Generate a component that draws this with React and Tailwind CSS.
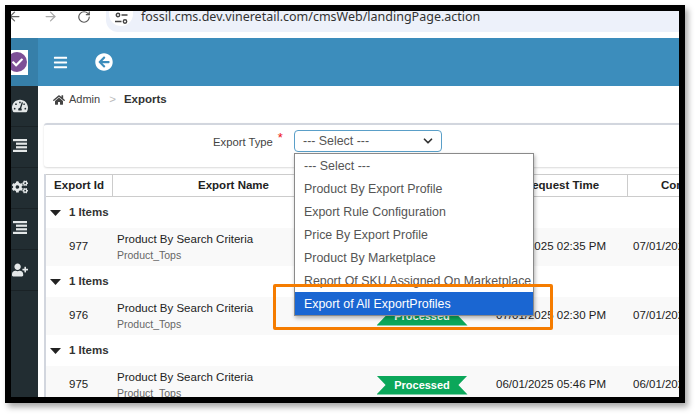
import { ArrowLeft, ArrowRight, RotateCw, ChevronDown } from 'lucide-react'
import { FaBars, FaArrowCircleLeft, FaHome, FaTachometerAlt, FaCogs, FaUserPlus, FaCheck } from 'react-icons/fa'

const rows = [
  { id: '977', request: '07/01/2025 02:35 PM', completed: '07/01/2025 02:36 PM' },
  { id: '976', request: '07/01/2025 02:30 PM', completed: '07/01/2025 02:31 PM' },
  { id: '975', request: '06/01/2025 05:46 PM', completed: '06/01/2025 05:47 PM' },
]

const options = [
  '--- Select ---',
  'Product By Export Profile',
  'Export Rule Configuration',
  'Price By Export Profile',
  'Product By Marketplace',
  'Report Of SKU Assigned On Marketplace',
]

function ListIcon() {
  return (
    <svg width="14" height="13" viewBox="0 0 14 13" fill="#e4e7e8" className="mb-[4px]">
      <rect x="0" y="0" width="14" height="2.2" />
      <rect x="3" y="3.6" width="11" height="2.2" />
      <rect x="3" y="7.2" width="11" height="2.2" />
      <rect x="0" y="10.8" width="14" height="2.2" />
    </svg>
  )
}

function SideItem({ children }) {
  return (
    <div className="flex h-[41px] items-center justify-center border-b border-[#1a2226] pr-[9px] text-[#e4e7e8]">
      {children}
    </div>
  )
}

function ProcessedBadge() {
  return (
    <div className="flex h-[19px] w-[91px] items-center justify-center bg-[#0ba75a] text-[11px] font-bold text-white [clip-path:polygon(0_0,100%_0,90%_50%,100%_100%,0_100%,10%_50%)]">
      Processed
    </div>
  )
}

function ExportGroup({ row }) {
  return (
    <div>
      <div className="flex h-[31px] items-center pl-[4px] font-bold text-[#333]">
        <svg width="11" height="6" viewBox="0 0 11 6" fill="#222">
          <polygon points="0,0 11,0 5.5,6" />
        </svg>
        <span className="ml-[8px]">1 Items</span>
      </div>
      <div className="grid h-[38px] grid-cols-[67px_243px_132px_140px_1fr] items-center whitespace-nowrap bg-[#f9f9f9] text-[#222]">
        <div className="pl-[23px]">{row.id}</div>
        <div className="pl-[4px]">
          <div className="leading-[15px]">Product By Search Criteria</div>
          <div className="text-[10.5px] leading-[16px] text-[#666]">Product_Tops</div>
        </div>
        <div className="flex justify-center">
          <ProcessedBadge />
        </div>
        <div className="pl-[8px]">{row.request}</div>
        <div className="pl-[5px]">{row.completed}</div>
      </div>
    </div>
  )
}

export default function App() {
  return (
    <div className="h-[415px] w-[698px] overflow-hidden bg-white pl-[5px] pt-[5px] font-['Liberation_Sans',Arial,sans-serif] text-[11.5px]">
      <div className="flex h-[398px] w-[680px] flex-col overflow-hidden border-[6px] border-black bg-white shadow-[3px_4px_6px_rgba(0,0,0,0.35)]">
        {/* browser bar */}
        <div className="flex h-[27px] shrink-0 items-start bg-white">
          <div className="flex h-[11px] w-[95px] shrink-0 items-center text-[#666]">
            <ArrowLeft size={15} className="ml-[-4px]" />
            <ArrowRight size={15} className="ml-[21px] text-[#aaa]" />
            <RotateCw size={14} className="ml-[19px] text-[#555]" />
          </div>
          <div className="flex h-[21px] flex-1 items-start rounded-bl-[12px] bg-[#edf1fa]">
            <div className="ml-[3px] flex h-[15px] w-[24px] items-center justify-center rounded-b-full bg-white">
              <svg width="13" height="13" viewBox="0 0 13 13" fill="none" stroke="#444" strokeWidth="1.4">
                <circle cx="3" cy="3" r="1.7" />
                <path d="M6.5 3h6M0 9.5h6.5" />
                <circle cx="10" cy="9.5" r="1.7" />
              </svg>
            </div>
            <span className="ml-[8px] font-['Noto_Sans',sans-serif] text-[12.5px] leading-[11px] text-[#333]">
              fossil.cms.dev.vineretail.com/cmsWeb/landingPage.action
            </span>
          </div>
        </div>

        {/* app header */}
        <div className="flex h-[48px] shrink-0 bg-[#3c8dbc]">
          <div className="flex w-[27px] shrink-0 items-center justify-end bg-[#367fa9] pr-[10px]">
            <div className="flex h-[25px] w-[17px] shrink-0 items-center justify-end overflow-hidden bg-white pr-[1px]">
              <div className="flex h-[20px] w-[20px] shrink-0 items-center justify-center rounded-full bg-[#7d4f96] text-white">
                <FaCheck size={11} />
              </div>
            </div>
          </div>
          <div className="flex items-center pl-[15px] text-white">
            <FaBars size={15} />
            <FaArrowCircleLeft size={18} className="ml-[27px]" />
          </div>
        </div>

        <div className="flex min-h-0 flex-1">
          {/* sidebar */}
          <div className="w-[27px] shrink-0 bg-[#222d32]">
            <SideItem><FaTachometerAlt size={16} /></SideItem>
            <SideItem><ListIcon /></SideItem>
            <SideItem><FaCogs size={16} className="mb-[2px]" /></SideItem>
            <SideItem><ListIcon /></SideItem>
            <SideItem><FaUserPlus size={16} /></SideItem>
          </div>

          {/* content */}
          <div className="relative min-w-0 flex-1 overflow-hidden bg-white">
            <div className="flex h-[37px] items-center pb-[10px] pl-[15px] text-[#444]">
              <FaHome size={12} className="text-[#444]" />
              <span className="ml-[4px] text-[11px]">Admin</span>
              <span className="ml-[9px] text-[#bbb]">&gt;</span>
              <span className="ml-[8px] font-bold text-[#333]">Exports</span>
            </div>

            <div className="ml-[6px] h-[44px] rounded-l-[3px] border-t-[2px] border-[#d2d6de] pt-[5px] shadow-[0_1px_2px_rgba(0,0,0,0.15)]">
              <div className="flex items-start">
                <div className="ml-[169px] flex h-[24px] w-[81px] items-center text-[11.25px] text-[#444]">
                  <span>Export Type</span>
                  <span className="mb-[8px] ml-[5px] text-[13px] text-[#e11]">*</span>
                </div>
                <div className="flex h-[22px] w-[148px] items-center justify-between rounded-[4px] border border-[#5a9fc8] px-[8px] text-[12.4px] text-[#555]">
                  <span className="pt-[1px]">--- Select ---</span>
                  <ChevronDown size={14} strokeWidth={3} className="mr-[-2px] text-[#333]" />
                </div>
              </div>
            </div>

            <div className="ml-[6px] mt-[7px] border-l-[2px] border-[#d2d6de]">
              <div className="grid h-[23px] grid-cols-[67px_243px_132px_140px_1fr] items-center whitespace-nowrap border-y border-[#ccc] font-bold text-[#222]">
                <div className="flex h-full items-center justify-center border-r border-[#ccc]">Export Id</div>
                <div className="pr-[2px] text-center">Export Name</div>
                <div></div>
                <div className="flex h-full items-center justify-center border-r border-[#ccc] pl-[8px]">Request Time</div>
                <div className="pl-[33px]">Completed Time</div>
              </div>
              {rows.map((row) => (
                <ExportGroup key={row.id} row={row} />
              ))}
            </div>

            {/* open select list */}
            <div className="absolute left-[256px] top-[67px] w-[240px] border border-[#8a8a8a] bg-white text-[12.4px] text-[#555] shadow-[1px_2px_4px_rgba(0,0,0,0.3)]">
              {options.map((option) => (
                <div key={option} className="flex h-[23px] items-center whitespace-nowrap pl-[9px] pt-[2px]">
                  {option}
                </div>
              ))}
              <div className="flex h-[23px] items-center bg-[#1a66d2] pl-[9px] pt-[2px] text-white">Export of All ExportProfiles</div>
            </div>

            {/* callout */}
            <div className="absolute left-[235px] top-[198px] h-[46px] w-[280px] rounded-[2px] border-[3px] border-[#f57c00]"></div>
          </div>
        </div>
      </div>
    </div>
  )
}
